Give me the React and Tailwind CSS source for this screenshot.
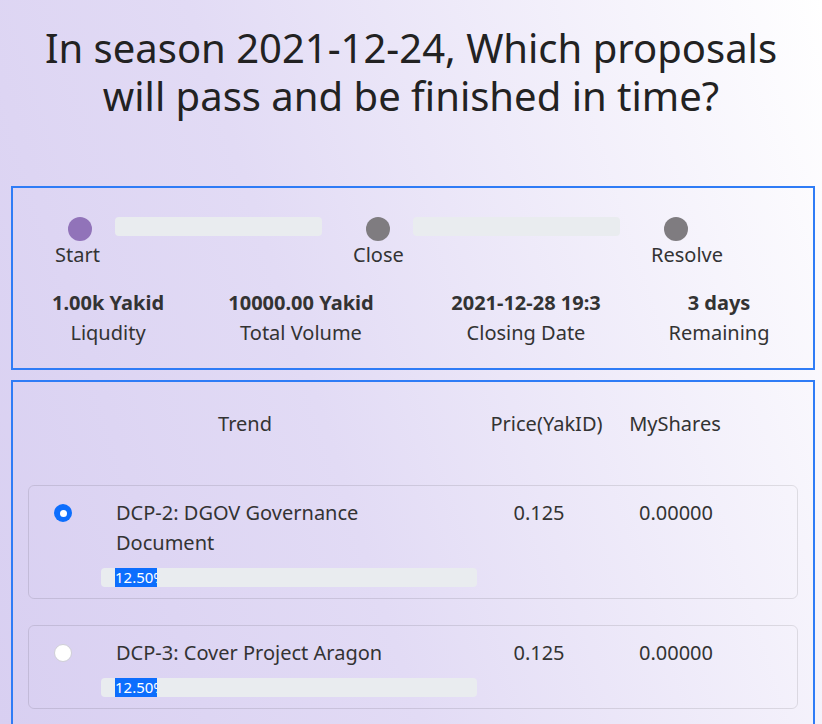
const steps = [
  { label: "Start", color: "bg-[#9173b9]", bar: true },
  { label: "Close", color: "bg-[#7f7c80]", bar: true },
  { label: "Resolve", color: "bg-[#7f7c80]", bar: false },
];

const stats = [
  { value: "1.00k Yakid", label: "Liqudity", w: "w-[140px]" },
  { value: "10000.00 Yakid", label: "Total Volume", w: "w-[246px]" },
  { value: "2021-12-28 19:3", label: "Closing Date", w: "w-[204px]" },
  { value: "3 days", label: "Remaining", w: "w-[182px]" },
];

const proposals = [
  { title: ["DCP-2: DGOV Governance", "Document"], price: "0.125", shares: "0.00000", checked: true },
  { title: ["DCP-3: Cover Project Aragon"], price: "0.125", shares: "0.00000", checked: false },
];

function Radio({ checked }) {
  return checked ? (
    <span className="flex h-[18px] w-[18px] items-center justify-center rounded-full bg-[#0d6efd]">
      <span className="h-[7px] w-[7px] rounded-full bg-white" />
    </span>
  ) : (
    <span className="h-[18px] w-[18px] rounded-full border border-[#cfcfd6] bg-white" />
  );
}

function Progress() {
  return (
    <div className="flex h-[19px] w-[376px] rounded bg-[#e9ecef] pl-[14px]">
      <div className="h-full w-[42px] overflow-hidden whitespace-nowrap bg-[#0d6efd] text-[15px] leading-[19px] text-white">
        12.50%
      </div>
    </div>
  );
}

export default function App() {
  return (
    <div
      className="min-h-screen bg-[linear-gradient(72deg,#d8cff1_0%,#e2dbf5_40%,#ffffff_100%)] text-[20px] text-[#333]"
      style={{ fontFamily: '"Noto Sans", "Open Sans", sans-serif' }}
    >
      <h1 className="pt-[24px] pb-[2px] text-center text-[40px] leading-[48px] text-[#222]">
        <div>In season 2021-12-24, Which proposals</div>
        <div>will pass and be finished in time?</div>
      </h1>

      <div className="ml-[11px] mr-[7px] mt-[64px] border-2 border-[#2f7cf6] pb-[20px] pt-[29px]">
        <div className="flex pl-[42px]">
          {steps.map((s) => (
            <div key={s.label} className="flex items-start">
              <div className="flex w-[50px] flex-col">
                <span className={`mx-auto h-6 w-6 rounded-full ${s.color}`} />
                <span className="mt-[2px] whitespace-nowrap leading-6">{s.label}</span>
              </div>
              {s.bar && <div className="ml-[10px] mr-[31px] h-[19px] w-[207px] rounded bg-[#e9ecef]" />}
            </div>
          ))}
        </div>

        <div className="mt-[21px] flex pl-[25px]">
          {stats.map((s) => (
            <div key={s.label} className={`${s.w} flex flex-col items-center`}>
              <span className="font-bold leading-[30px]">{s.value}</span>
              <span className="leading-[30px]">{s.label}</span>
            </div>
          ))}
        </div>
      </div>

      <div className="ml-[11px] mr-[7px] mt-[10px] border-2 border-[#2f7cf6] px-[15px] pb-[20px] pt-[28px]">
        <div className="flex leading-[28px]">
          <div className="w-[434px] text-center">Trend</div>
          <div className="ml-[17px] w-[135px] text-center">Price(YakID)</div>
          <div className="w-[122px] text-center">MyShares</div>
        </div>

        <div className="mt-[47px] flex flex-col gap-[26px]">
          {proposals.map((p) => (
            <div key={p.title[0]} className="rounded-md border border-black/10 pb-[11px] pt-[12px]">
              <div className="flex">
                <div className="flex w-[68px] justify-center pt-[6px]">
                  <Radio checked={p.checked} />
                </div>
                <div className="w-[378px] pl-[19px] leading-[30px]">
                  {p.title.map((t) => (
                    <div key={t}>{t}</div>
                  ))}
                </div>
                <div className="w-[128px] text-center leading-[30px]">{p.price}</div>
                <div className="w-[146px] text-center leading-[30px]">{p.shares}</div>
              </div>
              <div className="ml-[72px] mt-[10px]">
                <Progress />
              </div>
            </div>
          ))}
        </div>
      </div>
    </div>
  );
}
